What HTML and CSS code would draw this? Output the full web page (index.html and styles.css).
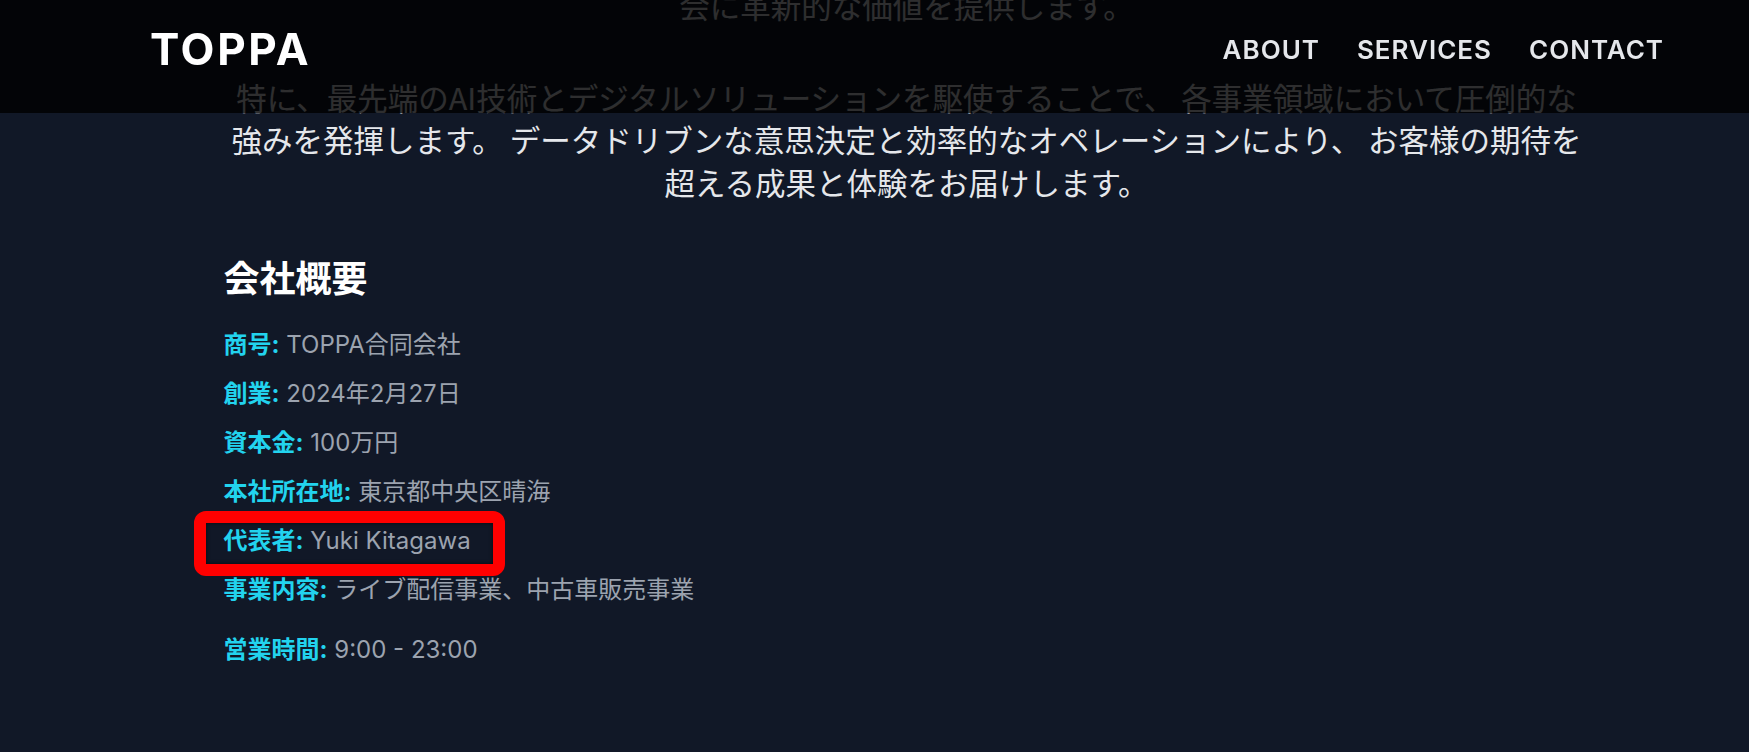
FILE: index.html
```html
<!DOCTYPE html>
<html lang="ja">

<head>
  <meta charset="UTF-8">
  <meta name="viewport" content="width=device-width, initial-scale=1.0">
  <title>TOPPA</title>
  <link rel="stylesheet" href="styles.css">
</head>

<body>

  <header class="site-header">
    <nav class="navbar">
      <div class="logo">TOPPA</div>
      <ul class="nav-links">
        <li><a href="#about">ABOUT</a></li>
        <li><a href="#services">SERVICES</a></li>
        <li><a href="#contact">CONTACT</a></li>
      </ul>
    </nav>
  </header>

  <main class="container" id="about">
    <p class="lead">会に革新的な価値を提供します。</p>
    <p class="lead">特に、最先端のAI技術とデジタルソリューションを駆使することで、 各事業領域において圧倒的な強みを発揮します。 データドリブンな意思決定と効率的なオペレーションにより、 お客様の期待を超える成果と体験をお届けします。</p>

    <section class="company">
      <h2>会社概要</h2>
      <ul class="info">
        <li><span class="label">商号:</span> TOPPA合同会社</li>
        <li><span class="label">創業:</span> 2024年2月27日</li>
        <li><span class="label">資本金:</span> 100万円</li>
        <li><span class="label">本社所在地:</span> 東京都中央区晴海</li>
        <li class="marked"><span class="label">代表者:</span> Yuki Kitagawa</li>
        <li><span class="label">事業内容:</span> ライブ配信事業、中古車販売事業</li>
        <li class="hours"><span class="label">営業時間:</span> 9:00 - 23:00</li>
      </ul>
    </section>
  </main>

</body>

</html>
```

FILE: styles.css
```css
/* Reset styles */
* {
  margin: 0;
  padding: 0;
  box-sizing: border-box;
}

body {
  font-family: Inter, "Noto Sans CJK JP", sans-serif;
  background-color: #111827;
  color: #e5e7eb;
  padding-left: 64px;
  height: 752px;
  overflow: hidden;
}

/* Header styles */
.site-header {
  position: fixed;
  top: 0;
  left: 0;
  right: 0;
  z-index: 10;
  background-color: rgba(0, 0, 0, 0.8);
}

.navbar {
  display: flex;
  align-items: center;
  justify-content: space-between;
  height: 113px;
  padding: 0 85px 15px 150px;
}

.logo {
  font-size: 44px;
  font-weight: 700;
  letter-spacing: 0.06em;
  color: #fff;
}

.nav-links {
  display: flex;
  gap: 37px;
  list-style-type: none;
}

.nav-links li a {
  font-size: 26px;
  font-weight: 600;
  letter-spacing: 1px;
  color: #e5e7eb;
  text-decoration: none;
}

/* Content styles */
.container {
  max-width: 1366px;
  margin: -16px auto 0;
}

.lead {
  font-family: "Noto Sans CJK JP", sans-serif;
  font-size: 30.5px;
  line-height: 42.5px;
  text-align: center;
  margin-bottom: 49px;
}

.lead:last-of-type {
  margin-bottom: 0;
}

.company {
  margin-top: 56px;
}

.company h2 {
  font-size: 36px;
  font-weight: 700;
  line-height: 40px;
  color: #fff;
  margin-bottom: 29px;
}

.info {
  list-style-type: none;
  display: flex;
  flex-direction: column;
  align-items: flex-start;
  gap: 16px;
}

.info li {
  font-size: 24px;
  line-height: 33px;
  color: #9ca3af;
}

.label {
  font-weight: 700;
  color: #22d3ee;
}

.info .hours {
  margin-top: 11px;
}

/* red annotation box */
.marked {
  position: relative;
}

.marked::after {
  content: "";
  position: absolute;
  top: -13px;
  bottom: -19px;
  left: -30px;
  right: -34px;
  border: 12px solid #ff0000;
  border-radius: 12px;
  box-shadow: inset 0 0 4px rgba(0, 0, 0, 0.6);
}
```
